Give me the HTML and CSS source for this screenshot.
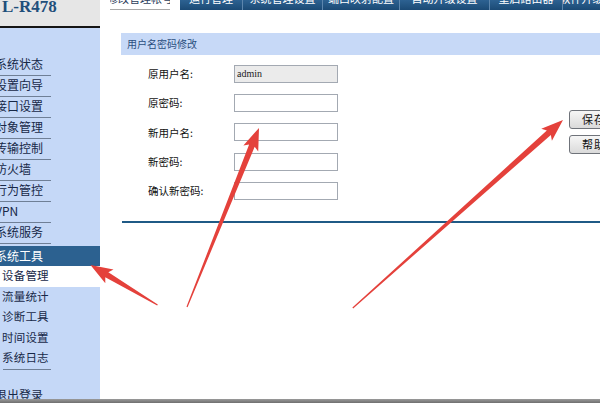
FILE: index.html
```html
<!DOCTYPE html>
<html lang="zh-CN">
  <head>
    <meta charset="UTF-8" />
    <meta name="viewport" content="width=device-width, initial-scale=1.0" />
    <title>用户名密码修改</title>
    <link rel="stylesheet" href="styles.css">
  </head>
  <body>
    <div class="page">
      <div class="screen">
        <div class="sidebar">
          <div class="sidebar_brand">L-R478</div>
          <ul class="sidebar_menu">
            <li class="sidebar_item">系统状态</li>
            <li class="sidebar_item">设置向导</li>
            <li class="sidebar_item">接口设置</li>
            <li class="sidebar_item">对象管理</li>
            <li class="sidebar_item">传输控制</li>
            <li class="sidebar_item">防火墙</li>
            <li class="sidebar_item">行为管控</li>
            <li class="sidebar_item">VPN</li>
            <li class="sidebar_item">系统服务</li>
            <li class="sidebar_item sidebar_item-active">系统工具</li>
          </ul>
          <ul class="sidebar_sub">
            <li class="sidebar_sub-item sidebar_sub-item-current">设备管理</li>
            <li class="sidebar_sub-item">流量统计</li>
            <li class="sidebar_sub-item">诊断工具</li>
            <li class="sidebar_sub-item">时间设置</li>
            <li class="sidebar_sub-item">系统日志</li>
          </ul>
          <div class="sidebar_rule"></div>
          <div class="sidebar_logout">退出登录</div>
        </div>

        <div class="main">
          <div class="tabs">
            <div class="tabs_item tabs_item-current"><span>修改管理帐号</span></div>
            <div class="tabs_item tabs_item-w63"><span>运行管理</span></div>
            <div class="tabs_item tabs_item-w80"><span>系统管理设置</span></div>
            <div class="tabs_item tabs_item-w77"><span>端口映射配置</span></div>
            <div class="tabs_item tabs_item-w90"><span>自动升级设置</span></div>
            <div class="tabs_item tabs_item-w73"><span>重启路由器</span></div>
            <div class="tabs_item tabs_item-rest"><span>软件升级</span></div>
          </div>

          <div class="content">
            <div class="panel_title">用户名密码修改</div>
            <div class="panel_body">
              <div class="fields">
                <div class="fields_row">
                  <label class="fields_label">原用户名:</label>
                  <input class="fields_input fields_input-readonly" type="text" value="admin" readonly />
                </div>
                <div class="fields_row">
                  <label class="fields_label">原密码:</label>
                  <input class="fields_input" type="password" />
                </div>
                <div class="fields_row">
                  <label class="fields_label">新用户名:</label>
                  <input class="fields_input" type="text" />
                </div>
                <div class="fields_row">
                  <label class="fields_label">新密码:</label>
                  <input class="fields_input" type="password" />
                </div>
                <div class="fields_row">
                  <label class="fields_label">确认新密码:</label>
                  <input class="fields_input" type="password" />
                </div>
              </div>
              <div class="actions">
                <button class="actions_btn">保存</button>
                <button class="actions_btn">帮助</button>
              </div>
            </div>
            <div class="panel_rule"></div>
          </div>
        </div>
      </div>
      <div class="window_edge"></div>

      <!-- red annotation arrows drawn over the screenshot -->
      <svg class="arrows" width="600" height="403" viewBox="0 0 600 403">
        <g fill="#e4413b">
          <polygon transform="translate(90.5 265) rotate(30.8)" points="0,0 22,-8 19,-3 78,-0.6 78,0.6 19,3 22,8" />
          <polygon transform="translate(259 128) rotate(111.9)" points="0,0 22,-8 19,-3 193,-0.6 193,0.6 19,3 22,8" />
          <polygon transform="translate(563 120) rotate(138.2)" points="0,0 22,-8 19,-3 282,-0.6 282,0.6 19,3 22,8" />
        </g>
      </svg>
    </div>
  </body>
</html>
```

FILE: styles.css
```css
html,
body {
  margin: 0;
  padding: 0;
}

body {
  width: 600px;
  height: 403px;
  overflow: hidden;
  background-color: #fff;
  color: #111;
  font-family: "Noto Sans CJK SC", "Liberation Sans", sans-serif;
  font-size: 11px;
}

ul {
  list-style: none;
  margin: 0;
  padding: 0;
}

.page {
  position: relative;
  width: 600px;
  height: 403px;
  display: flex;
  flex-direction: column;
}

.screen {
  display: flex;
  height: 399px;
  overflow: hidden;
}

.window_edge {
  height: 4px;
  background: linear-gradient(#9a9a9a, #6f6f6f);
}

/* left menu */
.sidebar {
  width: 100px;
  flex-shrink: 0;
  background-color: #c5d8f7;
}

.sidebar_brand {
  height: 26px;
  background-color: #e6e6e6;
  border-bottom: 2px solid #151515;
  color: #1f4f7b;
  font-family: "Liberation Serif", serif;
  font-weight: bold;
  font-size: 17px;
  line-height: 14px;
  padding-left: 2px;
  overflow: hidden;
}

.sidebar_menu {
  padding-top: 27px;
}

.sidebar_item {
  width: 51px;
  height: 20px;
  line-height: 18px;
  border-bottom: 1px solid #6f7f96;
  text-indent: -5px;
  font-size: 12px;
  color: #172848;
  white-space: nowrap;
}

.sidebar_item-active {
  width: 100px;
  height: 20px;
  line-height: 20px;
  margin-top: 2px;
  border-bottom: none;
  background-color: #2c6190;
  color: #fff;
}

.sidebar_sub-item {
  height: 20.5px;
  line-height: 19px;
  padding-left: 2px;
  font-size: 11.5px;
  letter-spacing: 0.2px;
  color: #172848;
}

.sidebar_sub-item-current {
  background-color: #fff;
}

.sidebar_rule {
  width: 48px;
  height: 1px;
  margin-left: 3px;
  background-color: #6f7f96;
}

.sidebar_logout {
  margin-top: 17px;
  text-indent: -5px;
  font-size: 12px;
  line-height: 16px;
  color: #172848;
}

/* right side */
.main {
  flex: 1;
  min-width: 0;
}

.tabs {
  display: flex;
  height: 10px;
  padding-left: 10px;
  overflow: hidden;
}

.tabs_item {
  height: 10px;
  flex-shrink: 0;
  display: flex;
  justify-content: center;
  background: linear-gradient(#2d6292, #1b4a75);
  border-left: 1px solid #5d86ad;
  color: #fff;
  font-size: 11px;
  overflow: hidden;
  white-space: nowrap;
}

.tabs_item span {
  line-height: 12px;
  margin-top: -8px;
}

.tabs_item-current {
  width: 60px;
  margin-right: 10px;
  background: #fff;
  border-left: none;
  border-bottom: 1px solid #a8a8a8;
  color: #2c3e5c;
  box-sizing: border-box;
}

.tabs_item-w63 {
  width: 62px;
  border-left: none;
}

.tabs_item-w80 {
  width: 79px;
}

.tabs_item-w77 {
  width: 76px;
}

.tabs_item-w90 {
  width: 89px;
}

.tabs_item-w73 {
  width: 72px;
}

.tabs_item-rest {
  flex: 1;
  flex-shrink: 0;
  width: 60px;
}

.content {
  padding-top: 23px;
  padding-left: 21px;
}

.panel_title {
  height: 22px;
  line-height: 22px;
  padding-left: 6px;
  background-color: #c7d9f7;
  color: #2a4f80;
  font-size: 10px;
}

.panel_body {
  display: flex;
  padding-top: 4px;
}

.fields {
  padding-left: 27px;
}

.fields_row {
  display: flex;
  align-items: center;
  height: 29.3px;
}

.fields_label {
  width: 86px;
  font-size: 10.5px;
  color: #111;
}

.fields_input {
  width: 104px;
  height: 18px;
  box-sizing: border-box;
  margin: 0;
  padding: 0 2px;
  border: 1px solid #a3a9b2;
  background-color: #fff;
  font-family: "Liberation Serif", serif;
  font-size: 10px;
  color: #222;
}

.fields_input-readonly {
  background-color: #ebebeb;
}

.actions {
  display: flex;
  flex-direction: column;
  gap: 6px;
  margin-left: 231px;
  padding-top: 51px;
}

.actions_btn {
  width: 50px;
  height: 19px;
  margin: 0;
  padding: 0;
  border: 1px solid #6f737a;
  border-radius: 3px;
  background: linear-gradient(#f6f6f6, #dadada);
  font-family: "Noto Sans CJK SC", "Liberation Sans", sans-serif;
  font-size: 11px;
  line-height: 17px;
  color: #111;
  letter-spacing: 1px;
}

.panel_rule {
  height: 2px;
  margin-top: 16px;
  margin-left: 1px;
  background-color: #1f5a86;
}

.arrows {
  position: absolute;
  top: 0;
  left: 0;
  pointer-events: none;
}
```
